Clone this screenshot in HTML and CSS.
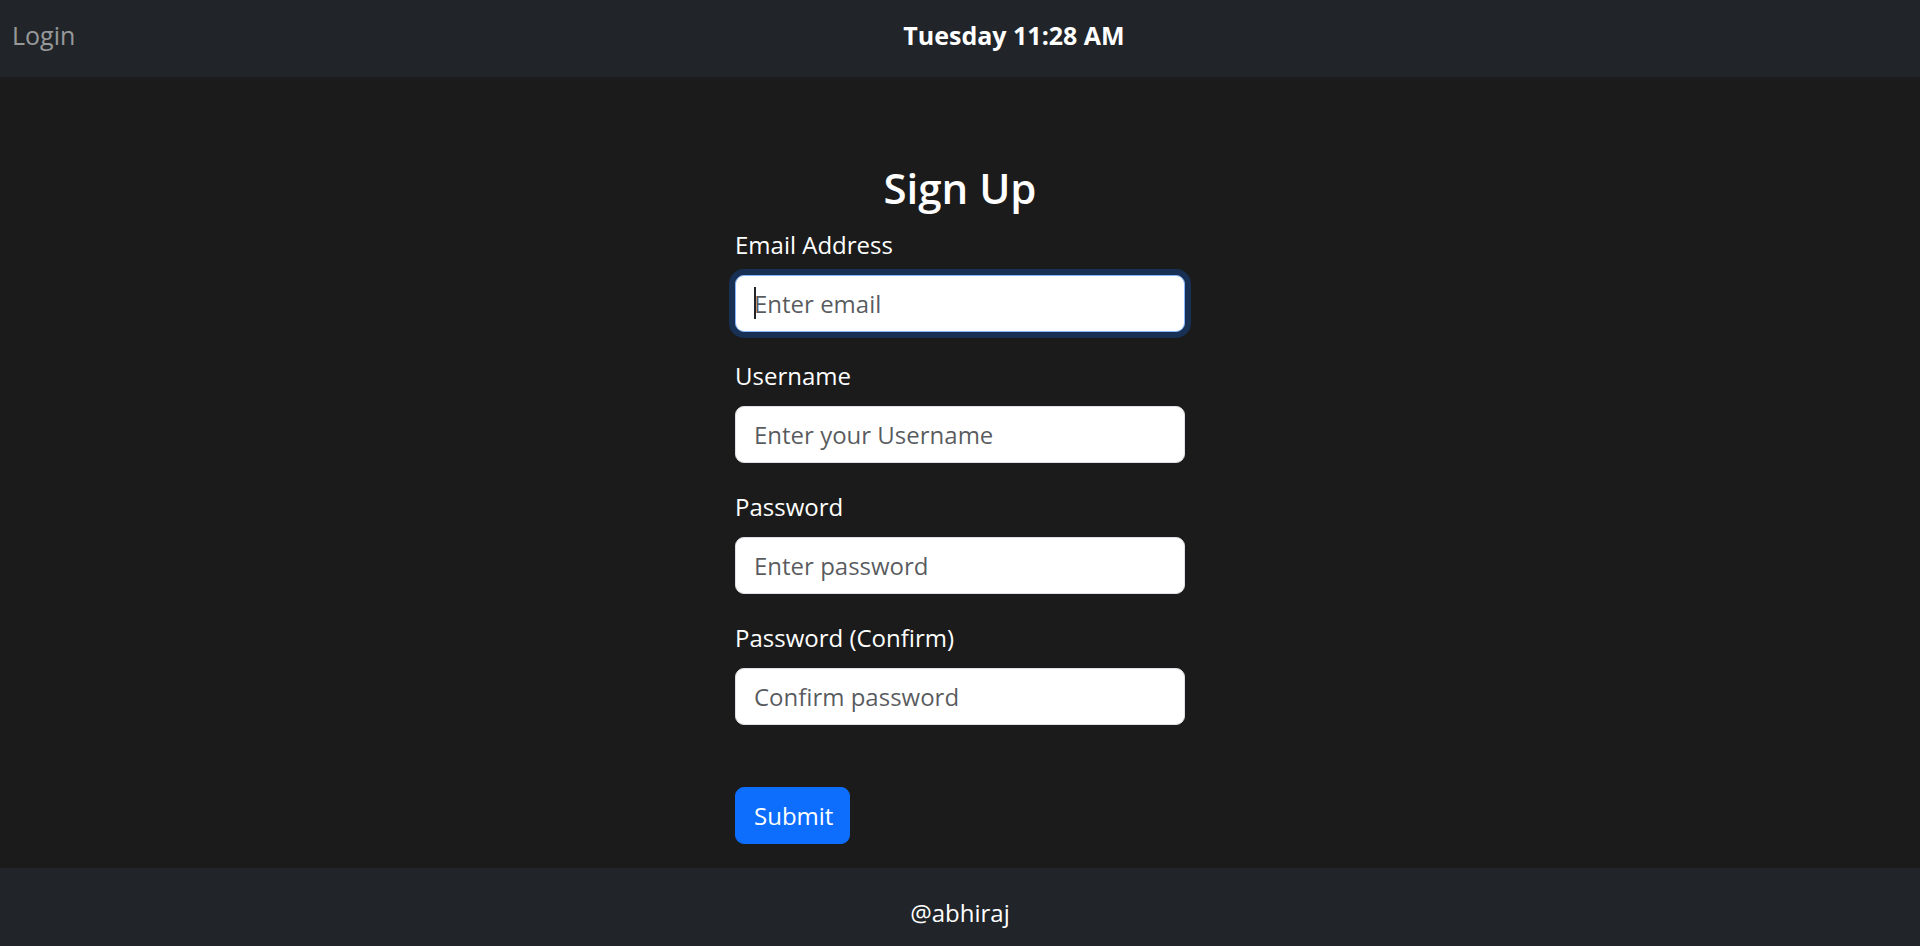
FILE: index.html
```html
<!DOCTYPE html>
<html lang="en">
<head>
<meta charset="utf-8">
<title>Sign Up</title>
<link rel="stylesheet" href="styles.css">
</head>
<body>
<nav class="topbar">
  <a class="brand" href="#">Login</a>
  <span class="clock">Tuesday 11:28 AM</span>
</nav>
<main class="page">
  <form class="signup">
    <h3 class="title">Sign Up</h3>
    <div class="field">
      <label class="field-label" for="email">Email Address</label>
      <span class="control-wrap">
        <input class="control is-focused" id="email" type="email" placeholder="Enter email">
        <span class="caret"></span>
      </span>
    </div>
    <div class="field">
      <label class="field-label" for="username">Username</label>
      <input class="control" id="username" type="text" placeholder="Enter your Username">
    </div>
    <div class="field">
      <label class="field-label" for="password">Password</label>
      <input class="control" id="password" type="password" placeholder="Enter password">
    </div>
    <div class="field">
      <label class="field-label" for="password2">Password (Confirm)</label>
      <input class="control" id="password2" type="password" placeholder="Confirm password">
    </div>
    <button class="submit" type="button">Submit</button>
  </form>
</main>
<footer class="footer">@abhiraj</footer>
</body>
</html>
```

FILE: styles.css
```css
* {
  box-sizing: border-box;
}

html, body {
  margin: 0;
  padding: 0;
}

body {
  min-height: 100vh;
  display: flex;
  flex-direction: column;
  background: #1b1b1b;
  color: #ffffff;
  font-family: "Open Sans", "Noto Sans", sans-serif;
  font-size: 24px;
  line-height: 1.5;
}

.topbar {
  height: 77px;
  flex: 0 0 auto;
  display: flex;
  align-items: center;
  padding: 0 0 6px 12px;
  background: #212529;
}

.brand {
  width: 63px;
  flex: 0 0 auto;
  color: rgba(255, 255, 255, 0.55);
  text-decoration: none;
  font-size: 25px;
  white-space: nowrap;
}

.clock {
  flex: 1 1 auto;
  padding-left: 33px;
  text-align: center;
  font-size: 25px;
  font-weight: 700;
  color: #ffffff;
}

.page {
  flex: 1 0 auto;
  display: flex;
  justify-content: center;
  padding-top: 86px;
}

.signup {
  width: 450px;
  display: flex;
  flex-direction: column;
  align-items: stretch;
}

.title {
  margin: 0 0 14px;
  font-size: 42px;
  font-weight: 600;
  line-height: 1.2;
  text-align: center;
}

.field {
  margin-bottom: 26px;
  display: flex;
  flex-direction: column;
}

.field-label {
  display: block;
  margin-bottom: 12px;
  line-height: 36px;
}

.control-wrap {
  position: relative;
  display: block;
}

.control {
  display: block;
  width: 100%;
  height: 57px;
  padding: 9px 18px;
  font-family: inherit;
  font-size: 24px;
  line-height: 36px;
  color: #212529;
  background: #ffffff;
  border: 1.5px solid #dee2e6;
  border-radius: 9px;
  outline: none;
}

.control::placeholder {
  color: rgba(33, 37, 41, 0.75);
  opacity: 1;
}

.control.is-focused {
  border-color: #86b7fe;
  box-shadow: 0 0 0 6px rgba(13, 110, 253, 0.25);
}

.caret {
  position: absolute;
  left: 19px;
  top: 12px;
  width: 2px;
  height: 32px;
  background: #212529;
}

.submit {
  align-self: flex-start;
  margin-top: 36px;
  height: 57px;
  padding: 9px 16px 9px 18px;
  font-family: inherit;
  font-size: 24px;
  line-height: 36px;
  color: #ffffff;
  background: #0d6efd;
  border: 1.5px solid #0d6efd;
  border-radius: 9px;
  cursor: pointer;
}

.footer {
  flex: 0 0 auto;
  height: 78px;
  display: flex;
  align-items: center;
  justify-content: center;
  padding-top: 12px;
  background: #212529;
  color: #ffffff;
  font-size: 24px;
}
```
